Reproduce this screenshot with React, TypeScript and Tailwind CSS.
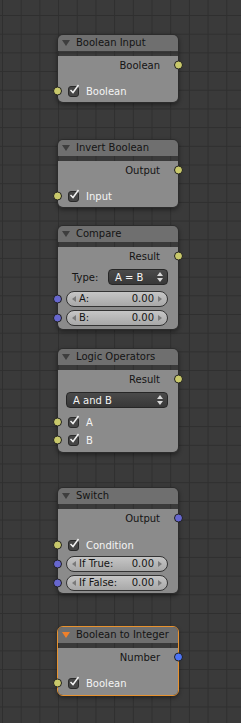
import React from 'react'

type SockColor = 'yellow' | 'purple' | 'blue'

const sockClass: Record<SockColor, string> = {
  yellow: 'bg-[#c9c96b]',
  purple: 'bg-[#6767cf]',
  blue: 'bg-[#4d74f5]',
}

function Socket({ side, color }: { side: 'left' | 'right'; color: SockColor }) {
  return (
    <span
      className={`absolute top-1/2 -translate-y-1/2 w-[9px] h-[9px] rounded-full border border-[#202020] ${
        side === 'left' ? 'left-[-5px]' : 'right-[-5px]'
      } ${sockClass[color]}`}
    />
  )
}

function Triangle({ active }: { active?: boolean }) {
  return (
    <svg width="8" height="6" viewBox="0 0 8 6" className="shrink-0">
      <path d="M0 0 H8 L4 6 Z" fill={active ? '#f0802a' : '#3e3e3e'} />
    </svg>
  )
}

function Node({
  title,
  top,
  active,
  children,
}: {
  title: string
  top: string
  active?: boolean
  children: React.ReactNode
}) {
  return (
    <div
      className={`absolute left-[57px] w-[122px] rounded-[6px] shadow-[0_2px_4px_rgba(0,0,0,0.4)] border ${
        active ? 'border-[#e8922e]' : 'border-[#2c2c2c]'
      } ${top}`}
    >
      <div className="h-4 rounded-t-[5px] bg-[#6f6f6f] flex items-center pl-[4px] gap-[6px]">
        <Triangle active={active} />
        <span className="text-[10px] leading-none text-[#141414] whitespace-nowrap">{title}</span>
      </div>
      <div className="rounded-b-[5px] bg-[#8b8b8b]">{children}</div>
    </div>
  )
}

function OutRow({ label, color }: { label: string; color: SockColor }) {
  return (
    <div className="relative h-[18px] mt-[5px] flex items-center justify-end pr-[18px] text-[10px] text-[#141414]">
      {label}
      <Socket side="right" color={color} />
    </div>
  )
}

function Check() {
  return (
    <span className="relative w-[11px] h-[11px] rounded-[3px] bg-[#464646] border border-[#2a2a2a] shrink-0">
      <svg width="11" height="11" viewBox="0 0 11 11" className="absolute left-[0px] top-[-3px]">
        <path d="M1.5 6 L4 8.5 L9.5 1" stroke="#f2f2f2" strokeWidth="1.5" fill="none" />
      </svg>
    </span>
  )
}

function CheckRow({ label, className }: { label: string; className?: string }) {
  return (
    <div className={`relative h-[18px] flex items-center pl-[10px] gap-[7px] ${className ?? ''}`}>
      <Socket side="left" color="yellow" />
      <Check />
      <span className="text-[10px] text-[#f4f4f4]">{label}</span>
    </div>
  )
}

function Arrow({ dir }: { dir: 'l' | 'r' }) {
  return (
    <svg width="4" height="6" viewBox="0 0 4 6" className="shrink-0">
      <path d={dir === 'l' ? 'M4 0 V6 L0 3 Z' : 'M0 0 V6 L4 3 Z'} fill="#7a7a7a" />
    </svg>
  )
}

function NumRow({ label, value }: { label: string; value: string }) {
  return (
    <div className="relative h-[19px] flex items-center pl-[8px] pr-[10px]">
      <Socket side="left" color="purple" />
      <div className="flex-1 h-[16px] rounded-full border border-[#333] bg-gradient-to-b from-[#c6c6c6] to-[#a8a8a8] flex items-center px-[5px] text-[10px] text-[#141414]">
        <Arrow dir="l" />
        <span className="ml-[3px]">{label}</span>
        <span className="flex-1" />
        <span className="mr-[4px]">{value}</span>
        <Arrow dir="r" />
      </div>
    </div>
  )
}

function UpDown() {
  return (
    <svg width="6" height="10" viewBox="0 0 6 10" className="shrink-0">
      <path d="M0 4 L3 0 L6 4 Z M0 6 L3 10 L6 6 Z" fill="#d8d8d8" />
    </svg>
  )
}

function Dropdown({ text, className }: { text: string; className?: string }) {
  return (
    <div
      className={`h-[16px] rounded-[4px] border border-[#262626] bg-gradient-to-b from-[#4a4a4a] to-[#383838] flex items-center justify-between pl-[6px] pr-[4px] text-[10px] text-[#f4f4f4] ${
        className ?? ''
      }`}
    >
      <span>{text}</span>
      <UpDown />
    </div>
  )
}

export default function App() {
  return (
    <div
      className="relative w-[241px] h-[723px] overflow-hidden bg-[#3a3a3a] bg-[linear-gradient(to_right,#2f2f2f_1px,transparent_1px),linear-gradient(to_bottom,#2f2f2f_1px,transparent_1px)] bg-[size:18.7px_18.7px] bg-[position:2px_15px] font-['DejaVu_Sans',sans-serif]"
    >
      <Node title="Boolean Input" top="top-[34px]">
        <OutRow label="Boolean" color="yellow" />
        <CheckRow label="Boolean" className="mt-[8px]" />
        <div className="h-[2px]" />
      </Node>

      <Node title="Invert Boolean" top="top-[139px]">
        <OutRow label="Output" color="yellow" />
        <CheckRow label="Input" className="mt-[8px]" />
        <div className="h-[2px]" />
      </Node>

      <Node title="Compare" top="top-[225px]">
        <OutRow label="Result" color="yellow" />
        <div className="h-[18px] mt-[3px] flex items-center pl-[14px] pr-[10px] text-[10px] text-[#141414]">
          <span className="w-[36px]">Type:</span>
          <Dropdown text="A = B" className="flex-1" />
        </div>
        <div className="h-[3px]" />
        <NumRow label="A:" value="0.00" />
        <NumRow label="B:" value="0.00" />
        <div className="h-[2px]" />
      </Node>

      <Node title="Logic Operators" top="top-[348px]">
        <OutRow label="Result" color="yellow" />
        <div className="h-[18px] mt-[3px] flex items-center pl-[8px] pr-[10px]">
          <Dropdown text="A and B" className="flex-1" />
        </div>
        <CheckRow label="A" className="mt-[4px]" />
        <CheckRow label="B" />
        <div className="h-[3px]" />
      </Node>

      <Node title="Switch" top="top-[487px]">
        <OutRow label="Output" color="purple" />
        <CheckRow label="Condition" className="mt-[9px]" />
        <NumRow label="If True:" value="0.00" />
        <NumRow label="If False:" value="0.00" />
        <div className="h-[1px]" />
      </Node>

      <Node title="Boolean to Integer" top="top-[626px]" active>
        <OutRow label="Number" color="blue" />
        <CheckRow label="Boolean" className="mt-[8px]" />
        <div className="h-[3px]" />
      </Node>
    </div>
  )
}
